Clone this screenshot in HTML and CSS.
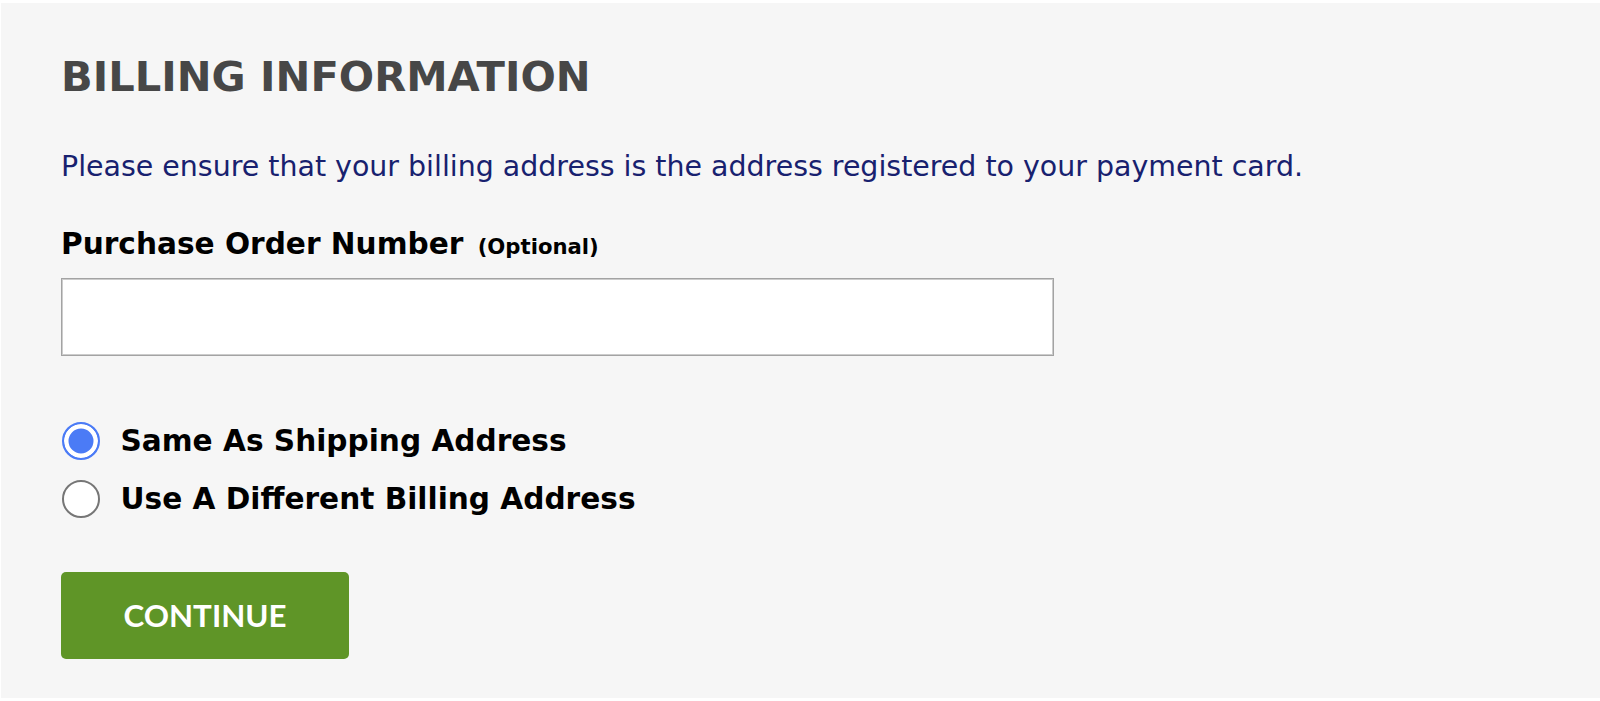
FILE: index.html
```html
<!DOCTYPE html>
<html lang="en">
<head>
<meta charset="utf-8">
<title>Billing Information</title>
<link rel="stylesheet" href="styles.css">
</head>
<body>
<main class="panel">
  <h1 class="title">BILLING INFORMATION</h1>
  <p class="notice">Please ensure that your billing address is the address registered to your payment card.</p>
  <label class="field-label" for="po">Purchase Order Number <span class="optional">(Optional)</span></label>
  <input class="text-input" id="po" type="text">
  <div class="radio-group">
    <label class="radio-row">
      <input class="radio" type="radio" name="billing" checked>
      <span class="radio-text">Same As Shipping Address</span>
    </label>
    <label class="radio-row">
      <input class="radio" type="radio" name="billing">
      <span class="radio-text">Use A Different Billing Address</span>
    </label>
  </div>
  <button class="continue" type="button">CONTINUE</button>
</main>
</body>
</html>
```
FILE: styles.css
```css
html, body {
  margin: 0;
  padding: 0;
  background: #ffffff;
}

.panel {
  box-sizing: border-box;
  display: flex;
  flex-direction: column;
  align-items: flex-start;
  height: 695px;
  margin: 3px 0 3px 1px;
  padding: 49.2px 60px 0 60px;
  background: #f6f6f6;
  font-family: "DejaVu Sans", "Liberation Sans", sans-serif;
}

.title {
  margin: 0;
  font-size: 41.6px;
  line-height: 50px;
  font-weight: 700;
  color: #474747;
}

.notice {
  margin: 47.3px 0 0 0;
  font-size: 28.45px;
  line-height: 36px;
  font-weight: 400;
  color: #18216f;
}

.field-label {
  margin-top: 40.1px;
  font-size: 29.6px;
  line-height: 36px;
  font-weight: 700;
  color: #000000;
}

.optional {
  margin-left: 4px;
  font-size: 21.2px;
  line-height: 20px;
}

.text-input {
  box-sizing: border-box;
  margin: 16.2px 0 0 0;
  width: 993px;
  height: 78px;
  padding: 0 16px;
  border: 1px solid #a3a3a3;
  box-shadow: inset 0 0 0 1px #cccccc;
  border-radius: 0;
  background: #ffffff;
  font: 28px "DejaVu Sans", sans-serif;
  outline: none;
}

.radio-group {
  display: flex;
  flex-direction: column;
  margin-top: 56.3px;
}

.radio-row {
  display: flex;
  align-items: center;
  gap: 21px;
  height: 58px;
  padding-left: 0.5px;
}

.radio {
  appearance: none;
  -webkit-appearance: none;
  box-sizing: border-box;
  flex: none;
  width: 38px;
  height: 38px;
  margin: 0;
  border: 2px solid #767676;
  border-radius: 50%;
  background: #ffffff;
}

.radio:checked {
  border-color: #4b7bf6;
  background: #4b7bf6;
  box-shadow: inset 0 0 0 4.5px #ffffff;
}

.radio-text {
  font-size: 29.6px;
  line-height: 36px;
  font-weight: 700;
  color: #000000;
}

.continue {
  box-sizing: border-box;
  margin-top: 43.6px;
  width: 288px;
  height: 87px;
  padding: 0;
  border: none;
  border-radius: 5px;
  background: #5f9527;
  color: #ffffff;
  font-family: Lato, "Liberation Sans", sans-serif;
  font-size: 31.3px;
  font-weight: 700;
  letter-spacing: 0;
}
```
